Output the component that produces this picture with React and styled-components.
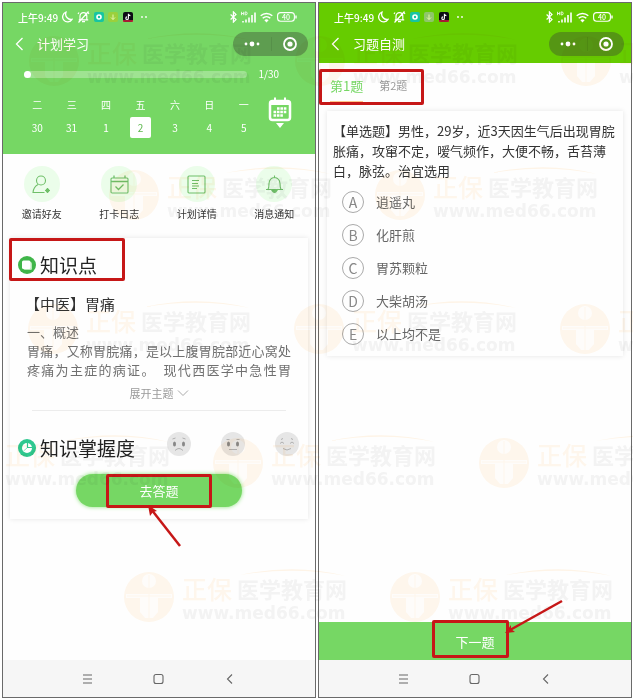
import React, { useState } from "react";
import styled, { createGlobalStyle } from "styled-components";

// Global styles

const GlobalStyle = createGlobalStyle`
  * {
    box-sizing: border-box;
  }
  body {
    margin: 0;
    background: #fff;
    font-family: "Noto Sans CJK SC", "Noto Sans", sans-serif;
    color: #333;
  }
  button {
    margin: 0;
    padding: 0;
    border: 0;
    background: none;
    font: inherit;
    color: inherit;
    cursor: pointer;
  }
  svg {
    display: block;
    flex-shrink: 0;
  }
`;

// Page and phone frame

const Page = styled.main`
  position: relative;
  display: grid;
  grid-template-columns: 1fr 1fr;
  gap: 2px;
  min-height: 100vh;
  padding: 2px 1px 2px 2px;
  overflow: hidden;
`;

const Phone = styled.section`
  display: flex;
  flex-direction: column;
  border: 1px solid #6a6a6a;
  background: #fefefe;
`;

const Header = styled.header`
  padding-bottom: ${({ $tall }) => ($tall ? "16px" : "6px")};
  background: ${({ $color }) => $color};
  color: #fff;
`;

const StatusRow = styled.div`
  display: flex;
  align-items: center;
  justify-content: space-between;
  height: 28px;
  padding: 0 18px 0 15px;
  font-size: 10px;
  font-weight: 500;
`;

const StatusGroup = styled.div`
  display: flex;
  align-items: center;
  gap: 4px;
`;

const TitleRow = styled.div`
  display: flex;
  align-items: center;
  height: 26px;
  padding: 0 7px 0 10px;
`;

const Title = styled.h1`
  flex-grow: 1;
  margin: 0 0 0 12px;
  font-size: 13px;
  font-weight: 400;
  line-height: 20px;
`;

const Capsule = styled.div`
  display: grid;
  grid-template-columns: 1fr 1fr;
  align-items: center;
  width: 75px;
  height: 24px;
  border-radius: 12px;
  background: rgba(60, 70, 50, 0.4);
`;

const CapsuleButton = styled.button`
  display: flex;
  justify-content: center;

  & + & {
    border-left: 1px solid rgba(0, 0, 0, 0.08);
  }
`;

const NavBar = styled.nav`
  display: flex;
  align-items: center;
  justify-content: center;
  gap: 58px;
  height: 37px;
  background: #f6f6f6;
  color: #666;
`;

// Plan header

const ProgressRow = styled.div`
  display: flex;
  align-items: center;
  gap: 11px;
  height: 14px;
  margin: 10px 36px 0 21px;
  font-size: 10px;
  line-height: 14px;
`;

const Track = styled.div`
  flex-grow: 1;
  height: 7px;
  border-radius: 4px;
  background: rgba(255, 255, 255, 0.3);
`;

const Knob = styled.div`
  width: 7px;
  height: 7px;
  border-radius: 50%;
  background: #fff;
`;

const CalendarRow = styled.div`
  display: flex;
  align-items: flex-start;
  justify-content: space-between;
  margin: 16px 23px 0 17px;
`;

const Week = styled.div`
  display: grid;
  grid-template-columns: repeat(7, 1fr);
  flex-grow: 1;
  margin-right: 7px;
`;

const Day = styled.button`
  display: flex;
  flex-direction: column;
  align-items: center;
  gap: 4px;
  font-size: 10px;
  line-height: 16px;
`;

const DayNumber = styled.span`
  width: 21px;
  height: 21px;
  border-radius: 2px;
  line-height: 21px;
  background: ${({ $active }) => ($active ? "#fff" : "transparent")};
  color: ${({ $active }) => ($active ? "#5fb850" : "#fff")};
`;

// Shortcuts

const Shortcuts = styled.div`
  display: grid;
  grid-template-columns: repeat(4, 1fr);
  padding: 12px 2px 0 0;
`;

const Shortcut = styled.button`
  display: flex;
  flex-direction: column;
  align-items: center;
  gap: 4px;
  font-size: 10px;
  line-height: 16px;
`;

const ShortcutIcon = styled.span`
  display: flex;
  align-items: center;
  justify-content: center;
  width: 36px;
  height: 36px;
  border-radius: 50%;
  background: #ebfdea;
`;

// Cards

const Card = styled.article`
  box-shadow: 0 0 5px rgba(0, 0, 0, 0.1);
  background: #fefefe;
`;

const TopicCard = styled(Card)`
  margin: 16px 7px 0;
  padding: 11px 0 12px;
`;

const SectionRow = styled.div`
  position: relative;
  display: flex;
  justify-content: space-between;
  height: 32px;
  padding: 0 9px 0 8px;
`;

const SectionTitle = styled.h2`
  display: flex;
  align-items: center;
  gap: 4px;
  margin: 0;
  font-size: 19px;
  font-weight: 400;
  line-height: 28px;
  color: #222;
`;

const TopicName = styled.h3`
  margin: 13px 15px 8px;
  font-size: 15px;
  font-weight: 400;
  line-height: 20px;
`;

const TopicText = styled.p`
  margin: 0 17px;
  font-size: 13px;
  line-height: 19px;
  color: #707070;
  text-align: justify;
  text-align-last: ${({ $full }) => ($full ? "justify" : "left")};
`;

const ExpandButton = styled.button`
  display: flex;
  align-items: center;
  gap: 3px;
  margin: 6px auto 9px;
  font-size: 11px;
  line-height: 16px;
  color: #999;
`;

const Divider = styled.hr`
  height: 1px;
  margin: 0 22px 21px;
  border: 0;
  background: #ececec;
`;

const Faces = styled.div`
  display: flex;
  align-items: flex-start;
  gap: 30px;
`;

const FaceButton = styled.button`
  height: 24px;
`;

const AnswerButton = styled.button`
  position: relative;
  display: block;
  width: 56%;
  height: 33px;
  margin: 10px auto 0;
  border-radius: 17px;
  background: #76d764;
  box-shadow: 0 0 4px #8be27b;
  font-size: 13px;
  color: #fff;
`;

const Spacer = styled.div`
  flex-grow: 1;
`;

// Quiz

const Tabs = styled.div`
  position: relative;
  display: flex;
  gap: 16px;
  height: 36px;
  margin-top: 6px;
  padding-left: 11px;
`;

const Tab = styled.button`
  height: 33px;
  border-bottom: 1px solid ${({ $active }) => ($active ? "#ffc58a" : "transparent")};
  font-size: ${({ $active }) => ($active ? "13px" : "11px")};
  color: ${({ $active }) => ($active ? "#76d764" : "#999")};
`;

const QuizCard = styled(Card)`
  margin: 6px 8px 0;
  padding: 10px 6px 11px;
`;

const Question = styled.p`
  margin: 0 0 10px;
  font-size: 13px;
  line-height: 20px;
`;

const Options = styled.div`
  display: grid;
  gap: 11px;
  padding-left: 9px;
`;

const Option = styled.label`
  position: relative;
  display: flex;
  align-items: center;
  gap: 12px;
  height: 22px;
  font-size: 13px;
  line-height: 20px;
  color: #666;
`;

const OptionRadio = styled.input`
  appearance: none;
  width: 22px;
  height: 22px;
  margin: 0;
  border: 1px solid #aaa;
  border-radius: 50%;

  &:checked {
    border-color: #76d764;
  }
`;

const OptionLetter = styled.span`
  position: absolute;
  left: 0;
  width: 22px;
  font-size: 14px;
  line-height: 22px;
  text-align: center;
  color: #888;
`;

const NextButton = styled.button`
  position: relative;
  height: 38px;
  background: #76d764;
  font-size: 13px;
  color: #fff;
`;

// Red marks drawn over the screens

const Mark = styled.span`
  position: absolute;
  top: ${({ $top }) => $top}px;
  left: ${({ $left }) => $left};
  width: ${({ $width }) => $width}px;
  height: ${({ $height }) => $height}px;
  border: 3px solid #c61717;
  border-radius: 2px;
  pointer-events: none;
`;

const ArrowSvg = styled.svg`
  position: absolute;
  top: ${({ $top }) => $top}px;
  left: ${({ $left }) => $left};
  z-index: 1;
  overflow: visible;
  pointer-events: none;
`;

// Watermark

const WatermarkLayer = styled.div`
  position: absolute;
  inset: 0;
  display: flex;
  flex-direction: column;
  gap: 84px;
  padding-top: 36px;
  overflow: hidden;
  mix-blend-mode: multiply;
  pointer-events: none;
`;

const WatermarkRow = styled.div`
  display: flex;
  gap: 44px;
  margin-left: ${({ $offset }) => $offset}px;
`;

const WatermarkTile = styled.div`
  position: relative;
  display: flex;
  flex-shrink: 0;
  gap: 8px;
  width: 222px;
  height: 50px;
  white-space: nowrap;
`;

const WatermarkName = styled.div`
  display: flex;
  align-items: center;
  gap: 5px;
  height: 32px;
  font-size: 22px;
  font-weight: 700;
  line-height: 32px;
  color: #f4f4f4;
`;

const WatermarkBrand = styled.span`
  font-size: 25px;
  font-weight: 500;
  color: #fff7ed;
`;

const WatermarkUrl = styled.div`
  font-family: "DejaVu Sans", sans-serif;
  font-size: 17px;
  font-weight: 700;
  line-height: 18px;
  color: #f4f4f4;
`;

const WatermarkArc = styled.svg`
  position: absolute;
  top: -4px;
  right: 0;
`;

const watermarkRows = [
  { offset: 29, tiles: ["a", "b", "c"] },
  { offset: 109, tiles: ["a", "b"] },
  { offset: 28, tiles: ["a", "b", "c"] },
  { offset: -53, tiles: ["a", "b", "c"] },
  { offset: 124, tiles: ["a", "b"] },
];

const Watermark = () => (
  <WatermarkLayer aria-hidden="true">
    {watermarkRows.map(({ offset, tiles }) => (
      <WatermarkRow key={offset} $offset={offset}>
        {tiles.map((tile) => (
          <WatermarkTile key={tile}>
            <svg width="50" height="50" viewBox="0 0 50 50">
              <circle cx="25" cy="25" r="25" fill="#fff7ed" />
              <circle cx="25" cy="9" r="7" fill="#fffdfb" />
              <path d="M2 22h46v4H34v14l-5 6h-8l-5-6V26H2z" fill="#fffdfb" />
              <path d="M25 3v44M3 24h44" stroke="#fff7ed" strokeWidth="1" />
            </svg>
            <div>
              <WatermarkName>
                <WatermarkBrand>正保</WatermarkBrand>
                医学教育网
              </WatermarkName>
              <WatermarkUrl>www.med66.com</WatermarkUrl>
            </div>
            <WatermarkArc width="106" height="10" viewBox="0 0 106 10">
              <path d="M0 7Q55 -5 106 8Q55 -2 0 7z" fill="#fff5e8" />
            </WatermarkArc>
          </WatermarkTile>
        ))}
      </WatermarkRow>
    ))}
  </WatermarkLayer>
);

// Status bar, the same on both phones

const StatusBar = ({ downloadColor }) => (
  <StatusRow>
    <StatusGroup>
      <span>上午9:49</span>
      <svg width="11" height="12" viewBox="0 0 11 12" fill="none" stroke="#fff" strokeWidth="1.3">
        <path d="M4 1.2A5 5 0 1 0 10 8.4 5.4 5.4 0 0 1 4 1.2z" />
      </svg>
      <svg width="13" height="12" viewBox="0 0 13 12" fill="none" stroke="#fff" strokeWidth="1.2">
        <path d="M3 8.5V5a3.4 3.4 0 0 1 6.8 0v3.5M1.8 8.8h9.4M5 10.7h3M1 3l1-1.5M12 3l-1-1.5M1.5 11.5l10-11" />
      </svg>
      <svg width="40" height="10" viewBox="0 0 40 10">
        <rect width="10" height="10" rx="2" fill="#16c5a2" />
        <circle cx="5" cy="5" r="2" fill="none" stroke="#fff" strokeWidth="1.6" />
        <rect x="14" width="10" height="10" rx="2" fill={downloadColor} />
        <path d="M19 2.5v5M17 5.5l2 2 2-2" fill="none" stroke="#e8f7b0" />
        <rect x="29" width="10" height="10" rx="2" fill="#0c0c14" />
        <path d="M29 9h10" stroke="#d8213f" strokeWidth="1.5" />
        <path d="M34.4 1.8v4.4a1.3 1.3 0 1 1-1.3-1.3M34.4 2q.5 1.5 2 1.6" fill="none" stroke="#fff" strokeWidth="1.1" />
      </svg>
      <svg width="15" height="4" viewBox="0 0 15 4" fill="#fff">
        <circle cx="4" cy="2" r="0.9" />
        <circle cx="8" cy="2" r="0.9" />
      </svg>
    </StatusGroup>
    <StatusGroup>
      <svg width="7" height="12" viewBox="0 0 7 12" fill="none" stroke="#fff" strokeWidth="1.2">
        <path d="M.6 3.5l5.4 5-2.6 2.6V.9L6 3.5l-5.4 5" />
      </svg>
      <svg width="15" height="12" viewBox="0 0 15 12" fill="none" stroke="#fff">
        <path d="M.5.8v3.4M2.7.8v3.4M.5 2.5h2.2M4.2.9v3h.7q1.3-.2 1.3-1.5T4.9.9z" strokeWidth=".8" />
        <path d="M2 10v1.5M5 8.5v3M8 6.5v5M11 4v7.5M14 1.5v10" strokeWidth="1.6" />
      </svg>
      <svg width="13" height="11" viewBox="0 0 13 11" fill="none" stroke="#fff" strokeWidth="1.5">
        <path d="M.7 3.8a8.4 8.4 0 0 1 11.6 0M2.7 6.2a5.6 5.6 0 0 1 7.6 0" />
        <path d="M6.5 10.5L4.4 8.2a3 3 0 0 1 4.2 0z" fill="#fff" stroke="none" />
      </svg>
      <svg width="20" height="10" viewBox="0 0 20 10">
        <rect x=".6" y=".6" width="16.8" height="8.6" rx="3" fill="none" stroke="#fff" strokeWidth="1.1" />
        <path d="M19 3.4v3" stroke="#fff" strokeWidth="1.4" />
        <text x="9" y="7.6" textAnchor="middle" fontSize="7" fill="#fff">
          40
        </text>
      </svg>
    </StatusGroup>
  </StatusRow>
);

const TitleBar = ({ title }) => (
  <TitleRow>
    <button aria-label="返回">
      <svg width="12" height="14" viewBox="0 0 12 14" fill="none" stroke="#fff" strokeWidth="1.3">
        <path d="M9.500 1l-6 6 6 6" />
      </svg>
    </button>
    <Title>{title}</Title>
    <Capsule>
      <CapsuleButton aria-label="更多">
        <svg width="16" height="6" viewBox="0 0 16 6" fill="#fff">
          <circle cx="2" cy="3" r="1.4" />
          <circle cx="8" cy="3" r="2.4" />
          <circle cx="14" cy="3" r="1.4" />
        </svg>
      </CapsuleButton>
      <CapsuleButton aria-label="关闭">
        <svg width="14" height="14" viewBox="0 0 14 14">
          <circle cx="7" cy="7" r="6" fill="none" stroke="#fff" strokeWidth="1.8" />
          <circle cx="7" cy="7" r="2.6" fill="#fff" />
        </svg>
      </CapsuleButton>
    </Capsule>
  </TitleRow>
);

const BottomNav = () => (
  <NavBar>
    <button aria-label="菜单">
      <svg width="14" height="12" viewBox="0 0 14 12" fill="none" stroke="currentColor" strokeWidth="1.1">
        <path d="M2 2h9M2 6h9M2 10h9" />
      </svg>
    </button>
    <button aria-label="主页">
      <svg width="12" height="12" viewBox="0 0 12 12" fill="none" stroke="currentColor" strokeWidth="1.1">
        <rect x="1" y="1.5" width="9" height="9" rx="2" />
      </svg>
    </button>
    <button aria-label="后退">
      <svg width="14" height="12" viewBox="0 0 14 12" fill="none" stroke="currentColor" strokeWidth="1.1">
        <path d="M9 1.5L4.5 6 9 10.5" />
      </svg>
    </button>
  </NavBar>
);

const days = [
  ["二", 30],
  ["三", 31],
  ["四", 1],
  ["五", 2],
  ["六", 3],
  ["日", 4],
  ["一", 5],
];

const shortcuts = [
  {
    label: "邀请好友",
    icon: (
      <>
        <circle cx="9" cy="5.5" r="4.5" />
        <path d="M6 9.5Q1.5 12 1 17.5h11.500M15.500 13v5M13 15.500h5M14 14l3 3M17 14l-3 3" />
      </>
    ),
  },
  {
    label: "打卡日志",
    icon: (
      <>
        <rect x="1" y="3" width="17" height="15" rx="1" />
        <path d="M1 6.500h17M4 .5V3M15 .5V3M5.500 11.500l3 3 5-5" strokeWidth="1.300" />
      </>
    ),
  },
  {
    label: "计划详情",
    icon: (
      <>
        <rect x="1" y="1" width="17" height="17" rx="1" />
        <path d="M5 5.500h7M5 8.500h6M5 11h7M5 13.500h5" />
      </>
    ),
  },
  {
    label: "消息通知",
    icon: (
      <>
        <path d="M1 14.500h17M3 14.500Q4 13 4 8.500 4.500 3 9.500 2.500 14.500 3 15 8.500q0 4.500 1 6M9.500 2.500V.5" />
        <path d="M7 15.500q2.500 4 5 0z" fill="#6fbf68" />
      </>
    ),
  },
];

const faces = [
  { label: "未掌握", brows: "M5.500 7l3-1M15.500 6l3 1", mouth: "M8 18.500q4-4 8 0" },
  { label: "一般", brows: "M5.500 7.500h3M15.500 7.500h3", mouth: "M8 17.500h8" },
  { label: "已掌握", brows: "M5 11.500q2-3 4 0M15 11.500q2-3 4 0M6 7.500l2-1M16 6.500l2 1", mouth: "M8 16.500q4 3 8 0", smile: true },
];

const options = [
  ["A", "逍遥丸"],
  ["B", "化肝煎"],
  ["C", "胃苏颗粒"],
  ["D", "大柴胡汤"],
  ["E", "以上均不是"],
];

// Left phone : study plan

const PlanScreen = () => {
  const [day, setDay] = useState(2);

  return (
    <Phone>
      <Header $tall $color="#76d764">
        <StatusBar downloadColor="#9bd03c" />
        <TitleBar title="计划学习" />
        <ProgressRow>
          <Track role="progressbar" aria-label="计划进度" aria-valuenow={1} aria-valuemax={30}>
            <Knob />
          </Track>
          <span>1/30</span>
        </ProgressRow>
        <CalendarRow>
          <Week>
            {days.map(([name, number]) => (
              <Day key={number} onClick={() => setDay(number)}>
                {name}
                <DayNumber $active={day === number}>{number}</DayNumber>
              </Day>
            ))}
          </Week>
          <button aria-label="日历">
            <svg width="24" height="32" viewBox="0 0 24 32">
              <rect x="2" y="4" width="20" height="19" rx="2.500" fill="none" stroke="#fff" strokeWidth="2.500" />
              <path d="M1 5h22v3H1zM6 .5h2V5H6zM16 .5h2V5h-2zM8 26h8l-4 5z" fill="#fff" />
              <path d="M9 11.500h10M5.500 15h13.500M5.500 18.500h10" stroke="#fff" strokeWidth="2.500" strokeDasharray="2.600 .8" />
            </svg>
          </button>
        </CalendarRow>
      </Header>
      <Shortcuts>
        {shortcuts.map(({ label, icon }) => (
          <Shortcut key={label}>
            <ShortcutIcon>
              <svg width="19" height="19" viewBox="0 0 19 19" fill="none" stroke="#6fbf68" strokeWidth="1.1">
                {icon}
              </svg>
            </ShortcutIcon>
            {label}
          </Shortcut>
        ))}
      </Shortcuts>
      <TopicCard>
        <SectionRow>
          <SectionTitle>
            <svg width="18" height="18" viewBox="0 0 18 18">
              <circle cx="9" cy="9" r="9" fill="#3fb549" />
              <rect x="5.500" y="6" width="8.500" height="8" rx="1.500" fill="#b7e8b8" />
              <rect x="4" y="4.500" width="8.500" height="8.500" rx="1.500" fill="#fff" />
            </svg>
            知识点
          </SectionTitle>
          <Mark $left="-1px" $top={-11} $width={116} $height={43} />
        </SectionRow>
        <TopicName>【中医】胃痛</TopicName>
        <TopicText>一、概述</TopicText>
        <TopicText $full>
          胃痛，又称胃脘痛，是以上腹胃脘部近心窝处疼痛为主症的病证。{"\u3000"}现代西医学中急性胃
        </TopicText>
        <ExpandButton>
          展开主题
          <svg width="12" height="8" viewBox="0 0 12 8" fill="none" stroke="#aaa">
            <path d="M1 1.500l5 5 5-5" />
          </svg>
        </ExpandButton>
        <Divider />
        <SectionRow>
          <SectionTitle>
            <svg width="18" height="18" viewBox="0 0 18 18">
              <circle cx="9" cy="9" r="9" fill="#2fc890" />
              <circle cx="9" cy="9" r="5" fill="#fff" />
              <path d="M9.500 4v4.500H14" fill="none" stroke="#2fc890" strokeWidth="1.200" />
              <path d="M9 9l-3.500 3" stroke="#8fe0bf" />
            </svg>
            知识掌握度
          </SectionTitle>
          <Faces>
            {faces.map(({ label, brows, mouth, smile }) => (
              <FaceButton key={label} aria-label={label}>
                <svg width="24" height="24" viewBox="0 0 24 24" fill="none" stroke="#b0b0b0">
                  <circle cx="12" cy="12" r="12" fill="#e6e6e6" stroke="none" />
                  <path d={brows} />
                  <path d={mouth} />
                  {!smile && (
                    <g fill="#888" stroke="none">
                      <ellipse cx="7.500" cy="12" rx="1.500" ry="2.500" />
                      <ellipse cx="16.500" cy="12" rx="1.500" ry="2.500" />
                    </g>
                  )}
                </svg>
              </FaceButton>
            ))}
          </Faces>
        </SectionRow>
        <AnswerButton>
          去答题
          <Mark $left="calc(50% - 53px)" $top={0} $width={106} $height={34} />
          <ArrowSvg $left="calc(50% - 11px)" $top={31} width="34" height="42" viewBox="0 0 34 42">
            <path d="M32 41L3 4" stroke="#c61717" strokeWidth="2.500" />
            <path d="M0 0l9 6-4 1-3 4z" fill="#c61717" />
          </ArrowSvg>
        </AnswerButton>
      </TopicCard>
      <Spacer />
      <BottomNav />
    </Phone>
  );
};

// Right phone : quiz

const QuizScreen = () => {
  const [tab, setTab] = useState(1);

  return (
    <Phone>
      <Header $color="#66cc00">
        <StatusBar downloadColor="#8fc66a" />
        <TitleBar title="习题自测" />
      </Header>
      <Tabs>
        <Tab $active={tab === 1} onClick={() => setTab(1)}>
          第1题
        </Tab>
        <Tab $active={tab === 2} onClick={() => setTab(2)}>
          第2题
        </Tab>
        <Mark $left="0px" $top={0} $width={105} $height={36} />
      </Tabs>
      <QuizCard>
        <Question>
          【单选题】男性，29岁，近3天因生气后出现胃脘胀痛，攻窜不定，嗳气频作，大便不畅，舌苔薄白，脉弦。治宜选用
        </Question>
        <Options>
          {options.map(([letter, text]) => (
            <Option key={letter}>
              <OptionRadio type="radio" name="answer" value={letter} />
              <OptionLetter>{letter}</OptionLetter>
              {text}
            </Option>
          ))}
        </Options>
      </QuizCard>
      <Spacer />
      <NextButton>
        下一题
        <Mark $left="calc(50% - 43px)" $top={-2} $width={77} $height={38} />
        <ArrowSvg $left="calc(50% + 30px)" $top={-22} width="58" height="34" viewBox="0 0 58 34">
          <path d="M57 1L5 30" stroke="#c61717" strokeWidth="2.500" />
          <path d="M0 33l6-8 0 4 4 3z" fill="#c61717" />
        </ArrowSvg>
      </NextButton>
      <BottomNav />
    </Phone>
  );
};

export default function App() {
  return (
    <>
      <GlobalStyle />
      <Page>
        <PlanScreen />
        <QuizScreen />
        <Watermark />
      </Page>
    </>
  );
}
